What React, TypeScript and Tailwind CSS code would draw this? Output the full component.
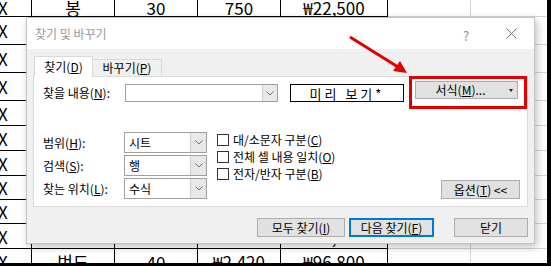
import React from 'react';

const CELL_FONT = '"Noto Sans CJK KR", "Noto Sans", sans-serif';
const UI_FONT = '"Noto Sans CJK KR", "Noto Sans", sans-serif';

// widths of spreadsheet columns A..G
const COLS = [32, 83, 83, 83, 107, 83, 80];

// row heights, first row starts above the visible area
const ROW_H = [26, 28, 28, 28, 25, 25, 25, 24, 24, 25, 26];

const ROWS: string[][] = [
  ['X', '봉', '30', '750', '₩22,500'],
  ['X'],
  ['X'],
  ['X'],
  ['X'],
  ['X'],
  ['X'],
  ['X'],
  ['X'],
  ['X', '모드', '50', '940', '₩47,000'],
  ['X', '번드', '40', '₩2,420', '₩96,800'],
];

const Chevron = () => (
  <svg width="8" height="5" viewBox="0 0 8 5" fill="none">
    <path d="M0.5 0.5L4 4L7.5 0.5" stroke="#707070" strokeWidth="1" />
  </svg>
);

const Select = ({ value }: { value: string }) => (
  <div className="flex h-[21px] w-[83px] border border-[#a0a0a0] bg-white">
    <div className="flex flex-1 items-center pl-[4px] text-[12px] leading-none">{value}</div>
    <div className="flex w-[16px] items-center justify-center border-l border-[#cfcfcf] bg-[#e8e8e8]">
      <Chevron />
    </div>
  </div>
);

const Check = ({ children }: { children: React.ReactNode }) => (
  <div className="flex h-[17px] items-center gap-[4px]">
    <div className="h-[12px] w-[12px] border border-[#333] bg-white" />
    <span className="text-[12px] leading-none">{children}</span>
  </div>
);

const Sheet = () => (
  <div className="-mt-[9px]" style={{ fontFamily: CELL_FONT }}>
    {ROWS.map((row, r) => (
      <div key={r} className="flex" style={{ height: ROW_H[r] }}>
        {COLS.map((w, c) => {
          const dark = c < 5;
          return (
            <div
              key={c}
              style={{ width: w }}
              className={`flex shrink-0 items-center overflow-hidden text-[17px] leading-none text-black ${
                dark ? 'border-b border-r border-black' : 'border-b border-r border-[#d4d4d4]'
              } ${c === 0 ? 'justify-start -indent-[2px]' : 'justify-center'} ${r === 0 ? 'pt-[8px]' : ''}`}
            >
              {row[c] ?? ''}
            </div>
          );
        })}
      </div>
    ))}
  </div>
);

const Dialog = () => (
  <div
    className="absolute left-[26px] top-[17px] flex h-[227px] w-[509px] flex-col border border-[#c4c4c4] shadow-[2px_3px_8px_rgba(0,0,0,0.25)]"
    style={{ fontFamily: UI_FONT }}
  >
    {/* title bar */}
    <div className="relative flex h-[31px] items-center bg-white pl-[8px] text-[12px] text-[#999]">
      찾기 및 바꾸기
      <span className="absolute left-[436px] top-[8px] text-[13px] text-[#8a8a8a]">?</span>
      <svg className="absolute left-[479px] top-[10px]" width="11" height="11" viewBox="0 0 11 11">
        <path d="M0.5 0.5L10.5 10.5M10.5 0.5L0.5 10.5" stroke="#777" strokeWidth="1" />
      </svg>
    </div>

    {/* body */}
    <div className="flex flex-1 flex-col bg-[#f0f0f0] px-[6px] pt-[7px]">
      {/* tabs */}
      <div className="relative z-10 flex h-[20px] items-end pl-[1px] text-[12px] leading-none">
        <div className="-mb-[1px] flex h-[21px] w-[59px] items-center justify-center border-l border-r border-t border-[#d9d9d9] bg-white">
          찾기(<u>D</u>)
        </div>
        <div className="flex h-[17px] w-[69px] items-center justify-center border-r border-t border-[#d9d9d9] bg-[#f0f0f0]">
          바꾸기(<u>P</u>)
        </div>
      </div>

      {/* panel */}
      <div className="relative flex h-[131px] w-[495px] flex-col border border-[#d9d9d9] bg-white pl-[9px] pt-[4px] text-[12px] leading-none">
        <div className="flex items-start">
          <div className="mt-[3px] flex h-[18px] w-[82px] items-center">
            찾을 내용(<u>N</u>):
          </div>
          <div className="mt-[3px] flex h-[18px] w-[153px] border border-[#a0a0a0] bg-white">
            <div className="flex-1" />
            <div className="flex w-[15px] items-center justify-center border-l border-[#cfcfcf] bg-[#e8e8e8]">
              <Chevron />
            </div>
          </div>
          <div className="ml-[12px] mt-[3px] flex h-[18px] w-[114px] items-center justify-center border border-black text-[13px] tracking-[3px]">
            미리 보기*
          </div>
          <div className="relative ml-[11px] flex h-[18px] w-[103px] items-center justify-center border border-[#adadad] bg-[#e1e1e1] pr-[12px]">
            서식(<u>M</u>)...
            <svg className="absolute right-[4px] top-[7px]" width="4" height="3" viewBox="0 0 4 3">
              <path d="M0 0H4L2 3Z" fill="#222" />
            </svg>
          </div>
        </div>

        <div className="mt-[30px] flex items-start">
          <div className="grid grid-cols-[81px_83px] gap-y-[2px]">
            <div className="flex h-[21px] items-center">
              범위(<u>H</u>):
            </div>
            <Select value="시트" />
            <div className="flex h-[21px] items-center">
              검색(<u>S</u>):
            </div>
            <Select value="행" />
            <div className="flex h-[21px] items-center">
              찾는 위치(<u>L</u>):
            </div>
            <Select value="수식" />
          </div>
          <div className="-mt-[1px] ml-[10px] flex flex-col">
            <Check>
              대/소문자 구분(<u>C</u>)
            </Check>
            <Check>
              전체 셀 내용 일치(<u>O</u>)
            </Check>
            <Check>
              전자/반자 구분(<u>B</u>)
            </Check>
          </div>
          <div className="flex-1" />
          <div className="mr-[7px] mt-[48px] flex h-[19px] w-[79px] items-center justify-center border border-[#adadad] bg-[#e1e1e1]">
            옵션(<u>T</u>) &lt;&lt;
          </div>
        </div>

        {/* highlight around the format button */}
        <div className="absolute left-[375px] top-[-1px] h-[33px] w-[118px] border-[3px] border-[#e00000]" />
      </div>

      {/* footer buttons */}
      <div className="mt-[11px] flex justify-end text-[12px] leading-none">
        <div className="flex h-[19px] w-[88px] items-center justify-center border border-[#adadad] bg-[#e1e1e1]">
          모두 찾기(<u>I</u>)
        </div>
        <div className="ml-[4px] flex h-[19px] w-[85px] items-center justify-center border-2 border-[#0078d7] bg-[#e1e1e1]">
          다음 찾기(<u>F</u>)
        </div>
        <div className="ml-[20px] flex h-[19px] w-[74px] items-center justify-center border border-[#adadad] bg-[#e1e1e1]">
          닫기
        </div>
      </div>
    </div>
  </div>
);

export default function App() {
  return (
    <div className="h-[266px] w-[551px] bg-black pb-[3px] pr-[4px]">
      <div className="relative h-full w-full overflow-hidden bg-white">
        <Sheet />
        <Dialog />
        {/* red pointer arrow */}
        <svg className="absolute left-0 top-0" width="551" height="266" viewBox="0 0 551 266">
          <line x1="350" y1="37" x2="398" y2="67" stroke="#e00000" strokeWidth="3" />
          <polygon points="407,73 393,71 400,61" fill="#e00000" />
        </svg>
      </div>
    </div>
  );
}
